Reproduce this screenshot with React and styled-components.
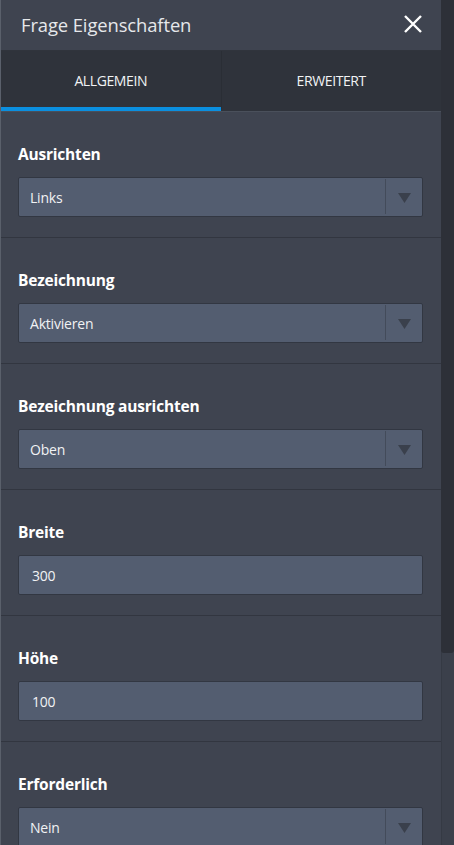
import React from "react";
import styled, { createGlobalStyle } from "styled-components";

const Global = createGlobalStyle`
  html, body { margin: 0; padding: 0; background: #3f4450; }
  body { font-family: "Open Sans", "Liberation Sans", sans-serif; overflow: hidden; }
  * { box-sizing: border-box; }
`;

const Frame = styled.div`
  display: flex;
  width: 454px;
  height: 845px;
  overflow: hidden;
`;

const Panel = styled.div`
  width: 441px;
  flex: none;
  display: flex;
  flex-direction: column;
  background: #3f4450;
  border-left: 1px solid #5a606b;
`;

const Header = styled.div`
  height: 51px;
  flex: none;
  display: flex;
  align-items: center;
  justify-content: space-between;
  padding: 0 16px 0 20px;
  background: #3f4450;
  border-bottom: 1px solid #30343c;
`;

const Title = styled.div`
  color: #e6e8eb;
  font-size: 18.4px;
  font-weight: 400;
  letter-spacing: -0.1px;
  margin-top: -1px;
`;

const CloseButton = styled.div`
  width: 24px;
  height: 24px;
  display: flex;
  align-items: center;
  justify-content: center;
  margin-top: -2px;
`;

const Tabs = styled.div`
  height: 61px;
  flex: none;
  display: flex;
  background: #2f333b;
  border-bottom: 1px solid #4a505b;
`;

const Tab = styled.div`
  flex: 1;
  display: flex;
  align-items: center;
  justify-content: center;
  color: #f2f3f5;
  font-size: 14px;
  letter-spacing: -0.4px;
  text-transform: uppercase;
  padding-top: 2px;
  border-bottom: 4px solid ${(p) => (p.$active ? "#0b8fdf" : "transparent")};
  & + & { border-left: 1px solid #2a2e35; }
`;

const Section = styled.div`
  flex: none;
  padding: 32px 18px 20px 17px;
  border-bottom: 1px solid #323640;
`;

const Label = styled.div`
  color: #ffffff;
  font-size: 15.5px;
  font-weight: 700;
  line-height: 20px;
  margin-bottom: 13px;
  letter-spacing: -0.2px;
`;

const Field = styled.div`
  height: 40px;
  display: flex;
  align-items: stretch;
  background: #535d70;
  border: 1px solid #323742;
  border-radius: 2px;
  color: #f1f2f4;
  font-size: 14px;
`;

const Value = styled.div`
  flex: 1;
  display: flex;
  align-items: center;
  padding-left: ${(p) => (p.$input ? "13px" : "11px")};
  letter-spacing: -0.2px;
`;

const Arrow = styled.div`
  width: 37px;
  flex: none;
  display: flex;
  align-items: center;
  justify-content: center;
  border-left: 1px solid #434b5a;
  margin: 1px 0 2px;
  padding-top: 2px;
`;

const Track = styled.div`
  flex: 1;
  display: flex;
  flex-direction: column;
  background: #3b404b;
  border-left: 1px solid #353a44;
`;

const Thumb = styled.div`
  height: 653px;
  background: #2d3038;
  border-radius: 0 0 3px 3px;
  margin-left: -1px;
`;

const sections = [
  { label: "Ausrichten", value: "Links", select: true },
  { label: "Bezeichnung", value: "Aktivieren", select: true },
  { label: "Bezeichnung ausrichten", value: "Oben", select: true },
  { label: "Breite", value: "300" },
  { label: "Höhe", value: "100" },
  { label: "Erforderlich", value: "Nein", select: true },
];

export default function App() {
  return (
    <>
      <Global />
      <Frame>
        <Panel>
          <Header>
            <Title>Frage Eigenschaften</Title>
            <CloseButton>
              <svg width="20" height="20" viewBox="0 0 20 20">
                <path d="M2 2 L18 18 M18 2 L2 18" stroke="#fff" strokeWidth="2.4" />
              </svg>
            </CloseButton>
          </Header>
          <Tabs>
            <Tab $active>Allgemein</Tab>
            <Tab>Erweitert</Tab>
          </Tabs>
          {sections.map((s) => (
            <Section key={s.label}>
              <Label>{s.label}</Label>
              <Field>
                <Value $input={!s.select}>{s.value}</Value>
                {s.select && (
                  <Arrow>
                    <svg width="13" height="10" viewBox="0 0 13 10">
                      <path d="M0 0 H13 L6.5 10 Z" fill="#3a404c" />
                    </svg>
                  </Arrow>
                )}
              </Field>
            </Section>
          ))}
        </Panel>
        <Track>
          <Thumb />
        </Track>
      </Frame>
    </>
  );
}
